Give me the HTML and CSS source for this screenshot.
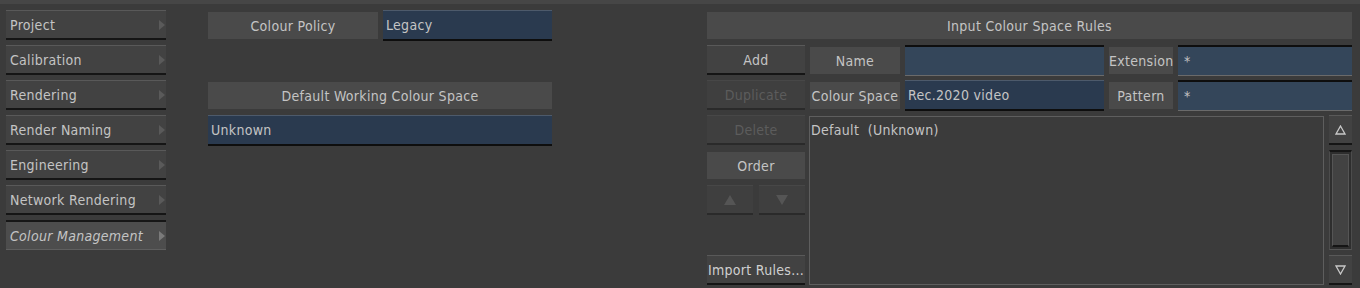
FILE: index.html
```
<html>
  <head>
    <title>Colour Management</title>
    <link rel="stylesheet" href="styles.css">
  </head>
  <body>
    <div class="page">
      <!-- settings sections -->
      <div class="menu">
        <div class="menu-item">Project<span class="arrow"></span></div>
        <div class="menu-item">Calibration<span class="arrow"></span></div>
        <div class="menu-item">Rendering<span class="arrow"></span></div>
        <div class="menu-item">Render Naming<span class="arrow"></span></div>
        <div class="menu-item">Engineering<span class="arrow"></span></div>
        <div class="menu-item">Network Rendering<span class="arrow"></span></div>
        <div class="menu-item selected">Colour Management<span class="arrow"></span></div>
      </div>

      <div class="policy">
        <div class="label policy-label">Colour Policy</div>
        <div class="field raised policy-field">Legacy</div>
        <div class="label wide working-label">Default Working Colour Space</div>
        <div class="field raised wide working-field">Unknown</div>
      </div>

      <div class="rules">
        <div class="label header">Input Colour Space Rules</div>

        <div class="btn">Add</div>
        <div class="label">Name</div>
        <div class="field inset"></div>
        <div class="label">Extension</div>
        <div class="field inset">*</div>

        <div class="btn disabled">Duplicate</div>
        <div class="label">Colour Space</div>
        <div class="field raised">Rec.2020 video</div>
        <div class="label">Pattern</div>
        <div class="field inset">*</div>

        <div class="btn disabled">Delete</div>
        <div class="list-area">
          <div class="list">Default  (Unknown)</div>
          <div class="scroller">
            <div class="btn scroll-btn">
              <svg width="11" height="10" viewBox="0 0 11 10"><path d="M5.5 1 L10 9 L1 9 Z" fill="none" stroke="#c8c8c8" stroke-width="1.3"/></svg>
            </div>
            <div class="track"><div class="thumb"></div></div>
            <div class="btn scroll-btn">
              <svg width="11" height="10" viewBox="0 0 11 10"><path d="M1 1 L10 1 L5.5 9 Z" fill="none" stroke="#c8c8c8" stroke-width="1.3"/></svg>
            </div>
          </div>
        </div>

        <div class="label order">Order</div>
        <div class="move">
          <div class="btn disabled">
            <svg width="14" height="12" viewBox="0 0 14 12"><path d="M7 1 L13 11 L1 11 Z" fill="#555"/></svg>
          </div>
          <div class="btn disabled">
            <svg width="14" height="12" viewBox="0 0 14 12"><path d="M1 1 L13 1 L7 11 Z" fill="#555"/></svg>
          </div>
        </div>
        <div class="btn import">Import Rules...</div>
      </div>
    </div>
  </body>
</html>
```

FILE: styles.css
```
/* dark panel look */
body {
  margin: 0;
  background-color: #3b3b3b;
  border-top: 4px solid #464646;
  font-family: "DejaVu Sans Condensed", "DejaVu Sans", sans-serif;
  font-stretch: condensed;
  font-size: 14px;
  letter-spacing: 0.3px;
  color: #c4c4c4;
  height: 284px;
  overflow: hidden;
}
.page {
  display: flex;
  align-items: flex-start;
  padding: 6px 0 0 6px;
}

/* left menu */
.menu {
  width: 160px;
  display: flex;
  flex-direction: column;
  gap: 5px;
}
.menu-item {
  position: relative;
  height: 27px;
  line-height: 29px;
  padding-left: 4px;
  background-color: #424242;
  border-top: 1px solid #595959;
  border-bottom: 2px solid #151515;
}
.menu-item .arrow {
  position: absolute;
  right: 1px;
  top: 9px;
  border-left: 6px solid #5a5a5a;
  border-top: 5px solid transparent;
  border-bottom: 5px solid transparent;
}
.menu-item.selected {
  background-color: #4d4d4d;
  border-top: 2px solid #161616;
  border-bottom: 1px solid #5f5f5f;
  font-style: italic;
}
.menu-item.selected .arrow {
  border-left-color: #7a7a7a;
}

/* shared widgets */
.label {
  height: 27px;
  line-height: 28px;
  margin-top: 2px;
  background-color: #4a4a4a;
  text-align: center;
  white-space: nowrap;
  overflow: hidden;
}
.field {
  height: 28px;
  line-height: 29px;
  padding-left: 3px;
  white-space: nowrap;
}
.field.raised {
  background-color: #2a3a4f;
  border-top: 1px solid #4d5a6b;
  border-bottom: 2px solid #0e0e0e;
}
.field.inset {
  background-color: #34465a;
  border-top: 2px solid #0e0e0e;
  border-bottom: 1px solid #6a6a6a;
  padding-left: 6px;
}
.btn {
  height: 27px;
  line-height: 28px;
  background-color: #424242;
  border-top: 1px solid #595959;
  border-bottom: 2px solid #151515;
  text-align: center;
  white-space: nowrap;
}
.btn.disabled {
  color: #5c5c5c;
  border-top-color: #474747;
  border-bottom-color: #2a2a2a;
  background-color: #3f3f3f;
}

/* colour policy column */
.policy {
  width: 344px;
  margin-left: 42px;
  display: grid;
  grid-template-columns: 170px 169px;
  column-gap: 5px;
  grid-template-rows: 30px 30px 30px 30px;
  row-gap: 5px;
}
.policy .wide {
  grid-column: 1 / 3;
}
.policy .working-label {
  grid-row: 3;
}
.policy .working-field {
  grid-row: 4;
}

/* input colour space rules */
.rules {
  width: 645px;
  margin-left: 155px;
  display: grid;
  grid-template-columns: 98px 90px 199px 64px 174px;
  grid-template-rows: repeat(8, 30px);
  column-gap: 5px;
  row-gap: 5px;
}
.rules .header {
  grid-column: 1 / 6;
}
.rules .btn {
  width: 98px;
}
.list-area {
  grid-column: 2 / 6;
  grid-row: 4 / 9;
  display: flex;
  gap: 5px;
  margin-left: -1px;
  margin-top: 1px;
}
.list {
  flex: 1;
  border: 1px solid #5e5e5e;
  padding-left: 1px;
  line-height: 26px;
  white-space: pre;
}
.scroller {
  width: 23px;
  display: flex;
  flex-direction: column;
  gap: 5px;
  margin-top: -1px;
}
.rules .scroll-btn {
  width: 23px;
  display: flex;
  align-items: center;
  justify-content: center;
}
.track {
  flex: 1;
  background-color: #2e2e2e;
  border-top: 2px solid #151515;
  padding: 2px;
  border-left: 1px solid #4c4c4c;
  border-right: 1px solid #4c4c4c;
  border-bottom: 1px solid #555;
  display: flex;
}
.thumb {
  flex: 1;
  background-color: #424242;
  border: 1px solid #555;
  border-bottom: 2px solid #151515;
}
.rules .order {
  grid-column: 1;
  grid-row: 5;
  width: 98px;
}
.move {
  grid-column: 1;
  grid-row: 6;
  display: flex;
  gap: 6px;
  width: 98px;
}
.rules .move .btn {
  width: 46px;
  display: flex;
  align-items: center;
  justify-content: center;
}
.rules .import {
  grid-column: 1;
  grid-row: 8;
  color: #d0d0d0;
}
```
